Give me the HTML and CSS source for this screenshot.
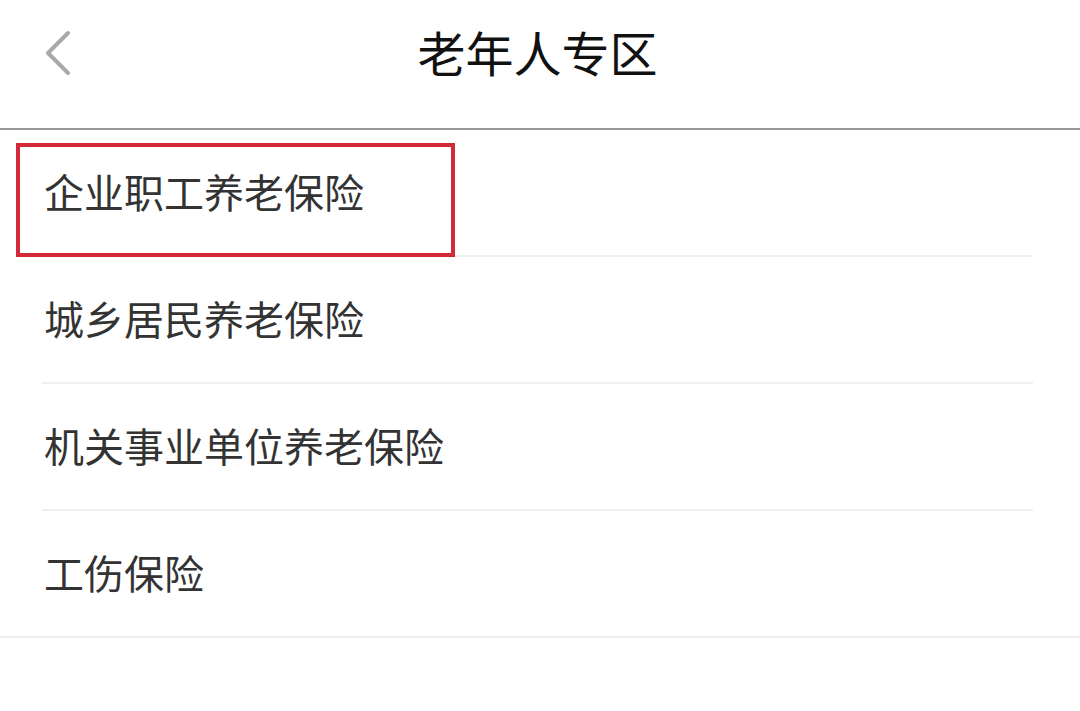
FILE: index.html
```html
<!DOCTYPE html>
<html lang="zh">
    <head>
        <meta charset="utf8">
        <meta name="viewport" content="width=device-width, initial-scale=1.0">
        <title>老年人专区</title>
        <link rel="stylesheet" href="styles.css">
    </head>
    <body>
        <div class="header">
            <a href="#" class="back">
                <svg width="34" height="48" viewBox="0 0 34 48">
                    <polyline points="24,4 4,24 24,44" fill="none" stroke="#a9a9a9" stroke-width="4" stroke-linecap="round" stroke-linejoin="round"/>
                </svg>
            </a>
            <h1 class="title">老年人专区</h1>
        </div>
        <ul class="list">
            <li class="item">
                <span class="label">企业职工养老保险</span>
                <div class="mark"></div>
            </li>
            <li class="item"><span class="label">城乡居民养老保险</span></li>
            <li class="item"><span class="label">机关事业单位养老保险</span></li>
            <li class="item last"><span class="label">工伤保险</span></li>
        </ul>
    </body>
</html>
```

FILE: styles.css
```css
body {
    font-family: "Noto Sans CJK SC", "Noto Sans", sans-serif;
    margin: 0;
    background-color: white;
    overflow: hidden;
}
.header {
    position: relative;
    height: 128px;
    border-bottom: 2px solid #98989c;
    display: flex;
    justify-content: center;
}
.back {
    position: absolute;
    left: 44px;
    top: 29px;
    text-decoration: none;
}
.back svg {
    display: block;
}
.title {
    margin: 0;
    height: 102px;
    line-height: 102px;
    font-size: 48px;
    font-weight: normal;
    color: #111;
    padding-right: 5px;
}
.list {
    list-style: none;
    margin: 0;
    padding: 0;
    border-bottom: 2px solid #eeeeee;
    box-shadow: 0 3px 4px rgba(0, 0, 0, 0.025);
}
.item {
    position: relative;
    height: 125px;
    margin: 0 47px 0 42px;
    border-bottom: 2px solid #f0f0f0;
    display: flex;
    align-items: center;
}
.item.last {
    border-bottom: none;
}
.label {
    font-size: 40px;
    color: #333;
    padding-left: 2px;
    margin-top: -3px;
}
.mark {
    position: absolute;
    top: 13px;
    left: -26px;
    width: 431px;
    height: 106px;
    border: 4px solid #d32a3a;
}
```
